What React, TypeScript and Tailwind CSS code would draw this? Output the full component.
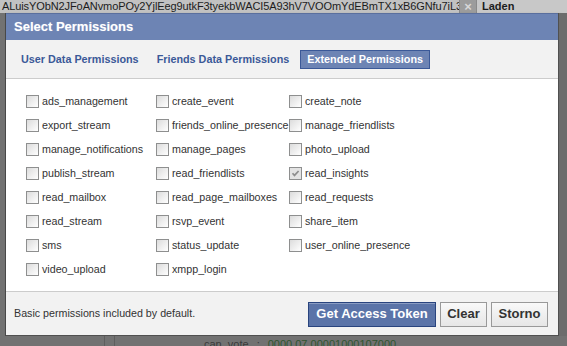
import { useState } from "react";

// Extended permission names, row by row (3 columns)
const perms: string[] = [
  "ads_management", "create_event", "create_note",
  "export_stream", "friends_online_presence", "manage_friendlists",
  "manage_notifications", "manage_pages", "photo_upload",
  "publish_stream", "read_friendlists", "read_insights",
  "read_mailbox", "read_page_mailboxes", "read_requests",
  "read_stream", "rsvp_event", "share_item",
  "sms", "status_update", "user_online_presence",
  "video_upload", "xmpp_login",
];

const tabs = ["User Data Permissions", "Friends Data Permissions", "Extended Permissions"];

function Box({ checked, disabled }: { checked: boolean; disabled?: boolean }) {
  return (
    <span
      className={
        "relative w-[13px] h-[13px] shrink-0 border border-[#8e8f8f] " +
        (disabled ? "bg-[#e3e3e3]" : "bg-gradient-to-br from-[#dcdcdc] to-white")
      }
    >
      {checked && (
        <svg viewBox="0 0 11 11" className="absolute inset-0 w-[11px] h-[11px]">
          <path d="M2.5 5.2 L4.5 7.4 L8.6 3" fill="none" stroke={disabled ? "#8d8d8d" : "#222"} strokeWidth="1.7" />
        </svg>
      )}
    </span>
  );
}

export default function App() {
  const [active, setActive] = useState(2);
  const [checked, setChecked] = useState<Record<string, boolean>>({ read_insights: true });

  return (
    <div className="w-[567px] h-[346px] overflow-hidden bg-[#6f6f6f] flex flex-col font-['Liberation_Sans',Arial,sans-serif]">
      {/* Page behind the overlay */}
      <div className="h-[13px] shrink-0 flex bg-[#c2c2c2] overflow-hidden">
        <div className="w-[459px] shrink-0 overflow-hidden whitespace-nowrap text-[11px] leading-[11px] text-[#1c1c1c] pl-[2px] pt-[1px] tracking-[-0.1px]">
          ALuisYObN2JFoANvmoPOy2YjlEeg9utkF3tyekbWACI5A93hV7VOOmYdEBmTX1xB6GNfu7iL3ipMBdM4nabZ
        </div>
        <div className="w-[18px] shrink-0 overflow-hidden bg-[#9c9c9c] border-x border-[#8a8a8a] flex items-center justify-center text-[#d8d8d8] text-[13px] leading-[12px] font-bold">
          ×
        </div>
        <div className="flex-1 overflow-hidden whitespace-nowrap pl-[5px] pt-[1px] text-[11px] leading-[11px] font-bold text-[#1c1c1c] bg-[#c8c8c8]">Laden</div>
      </div>

      <div className="flex flex-1 min-h-0">
        <div className="w-[6px] shrink-0 border-r border-[#4a4a4a] bg-[#727272]" />

        {/* Dialog */}
        <div className="w-[553px] h-[323px] flex flex-col bg-white border-r border-b border-[#505050] shadow-[2px_2px_3px_rgba(0,0,0,0.45)]">
          <div className="h-[27px] shrink-0 bg-[#6d84b4] border-t border-[#5a6f9e] pl-[8px] flex items-center text-white font-bold text-[13px] [text-shadow:0_0_1px_rgba(255,255,255,0.4)]">
            Select Permissions
          </div>

          <div className="h-[39px] shrink-0 bg-[#f2f2f2] border-b border-[#cccccc] flex items-center gap-[4px] pl-[8px] pt-[1px]">
            {tabs.map((t, i) => (
              <button
                key={t}
                onClick={() => setActive(i)}
                className={
                  "h-[19px] px-[6px] text-[10.8px] font-bold leading-none border " +
                  (i === active
                    ? "bg-[#6d84b4] border-[#3b5998] text-white"
                    : "border-transparent text-[#3b5998]")
                }
              >
                {t}
              </button>
            ))}
          </div>

          <div className="h-[212px] shrink-0 bg-white pt-[10px] pl-[20px]">
            <div className="grid grid-cols-[130px_133px_auto] auto-rows-[24px]">
              {perms.map((p) => (
                <label
                  key={p}
                  onClick={() => p !== "read_insights" && setChecked({ ...checked, [p]: !checked[p] })}
                  className="flex items-center gap-[3px] text-[10.7px] text-[#333] whitespace-nowrap cursor-default"
                >
                  <Box checked={!!checked[p]} disabled={p === "read_insights"} />
                  <span>{p}</span>
                </label>
              ))}
            </div>
          </div>

          <div className="flex-1 bg-[#f2f2f2] border-t border-[#cccccc] flex items-center pl-[8px] pr-[10px]">
            <span className="text-[10.7px] text-[#333] flex-1">Basic permissions included by default.</span>
            <div className="flex gap-[4px] pt-[1px]">
              <button className="h-[25px] w-[128px] bg-[#5b74a8] border border-[#29447e] text-white font-bold text-[13px] shadow-[inset_0_1px_0_#8a9cc2]">
                Get Access Token
              </button>
              <button
                onClick={() => setChecked({ read_insights: true })}
                className="h-[25px] w-[47px] bg-gradient-to-b from-[#f9f9f9] to-[#e6e6e6] border border-[#999] text-[#333] font-bold text-[13px]"
              >
                Clear
              </button>
              <button className="h-[25px] w-[57px] bg-gradient-to-b from-[#f9f9f9] to-[#e6e6e6] border border-[#999] text-[#333] font-bold text-[13px]">
                Storno
              </button>
            </div>
          </div>
        </div>

        <div className="flex-1 bg-[#6c6c6c]" />
      </div>

      {/* Faint page content below the dialog */}
      <div className="h-[10px] shrink-0 flex text-[11px] leading-[12px] overflow-hidden bg-[#727272]">
        <div className="w-[105px] shrink-0 border-r border-[#5e5e5e]" />
        <div className="w-[10px] shrink-0 border-r border-[#5e5e5e]" />
        <div className="pl-[89px] pt-[2px] text-[#3a3a3a]">can_vote</div>
        <div className="pl-[8px] pt-[2px] text-[#3a3a3a]">:</div>
        <div className="pl-[8px] pt-[2px] text-[#2f552f]">0000 07 00001000107000</div>
      </div>
    </div>
  );
}
